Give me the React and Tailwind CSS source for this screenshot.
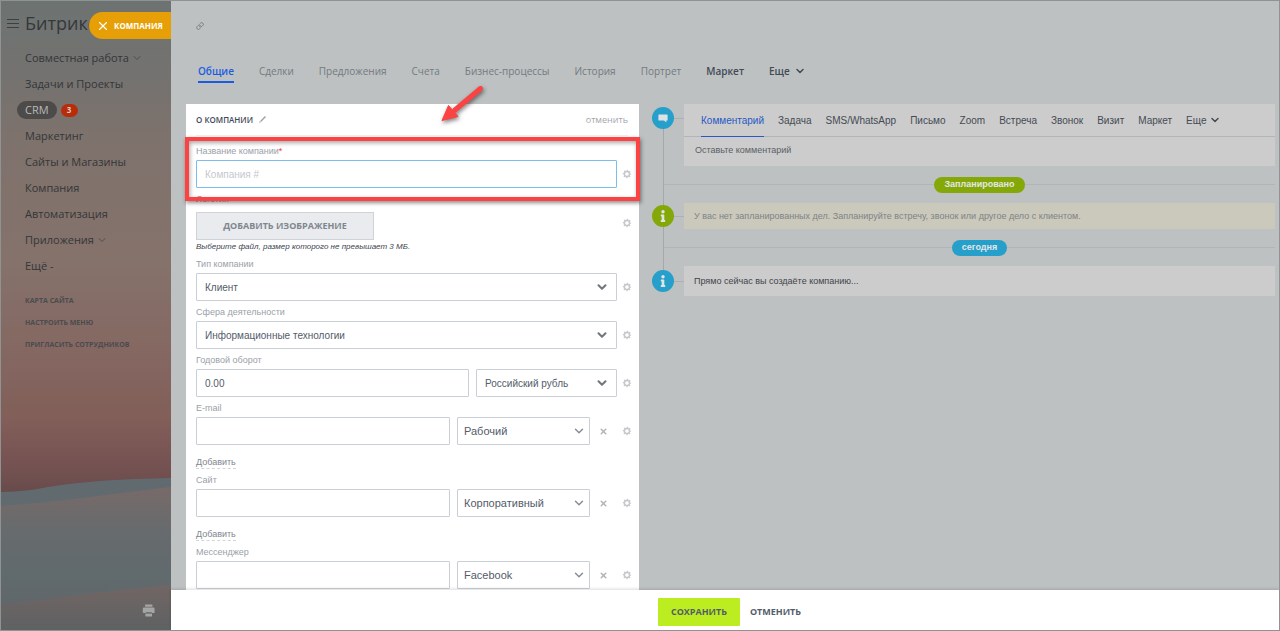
import React from "react";
import { ChevronDown, Link, X } from "lucide-react";
import { FaInfo } from "react-icons/fa";

const sans = "font-['Open_Sans',sans-serif]";
const arial = "font-['Liberation_Sans',Arial,sans-serif]";
const box = "h-[28px] border border-[#c9cfd4] rounded-[1px] bg-white text-[#535c69] outline-none";

function Gear() {
  return (
    <button type="button" aria-label="Настройки поля" className="flex size-[10px] shrink-0 items-center justify-center">
      <svg viewBox="0 0 10 10" className="size-[10px]" fill="none" stroke="#c6c9cc">
        <circle cx="5" cy="5" r="2.500" strokeWidth="1.400" />
        <circle cx="5" cy="5" r="3.600" strokeWidth="1.200" strokeDasharray="1.500 1.327" strokeDashoffset="0.750" />
      </svg>
    </button>
  );
}

function Select({ id, label, value, className, thin }) {
  return (
    <div className={"relative " + className}>
      <select id={id} aria-label={label} defaultValue={value} className={box + " w-full appearance-none pr-[24px] " + (thin ? "pl-[6px] text-[11px]" : "pl-[8px] text-[10px]")}>
        <option>{value}</option>
      </select>
      <ChevronDown
        className={"pointer-events-none absolute top-[7px] size-[14px] " + (thin ? "right-[4px] text-[#868d94]" : "right-[8px] text-[#6f7780]")}
        strokeWidth={thin ? 2.5 : 3.5}
      />
    </div>
  );
}

function Field({ id, label, required, children }) {
  return (
    <div>
      <label htmlFor={id} className="mb-[3px] block h-[12px] text-[9px] leading-[12px] text-[#9aa1a8]">
        {label}
        {required && <span className="text-[#f33]">*</span>}
      </label>
      {children}
    </div>
  );
}

function Row({ children }) {
  return (
    <div className="flex items-center gap-[5px]">
      <div className="flex min-w-0 flex-1 gap-[7px]">{children}</div>
      <Gear />
    </div>
  );
}

function MultiField({ id, label, type, kind, noAdd }) {
  return (
    <Field id={id} label={label}>
      <Row>
        <input id={id} type={type} className={box + " min-w-0 flex-1 px-[8px] text-[10px]"} />
        <Select label={label + ": тип"} value={kind} thin className="w-[133px]" />
        <button type="button" aria-label="Удалить" className="flex w-[20px] items-center pl-[2px] text-[#b0b4b8]">
          <X className="size-[9px]" strokeWidth={4} />
        </button>
      </Row>
      {!noAdd && (
        <button type="button" className="mt-[11px] block h-[13px] border-b border-dashed border-[#d3d6d9] text-[9px] leading-[13px] text-[#80868e]">
          Добавить
        </button>
      )}
    </Field>
  );
}

const menu = [
  { t: "Совместная работа", arrow: true },
  { t: "Задачи и Проекты" },
  { t: "CRM", active: true },
  { t: "Маркетинг" },
  { t: "Сайты и Магазины" },
  { t: "Компания" },
  { t: "Автоматизация" },
  { t: "Приложения", arrow: true },
  { t: "Ещё -" },
];

function Sidebar() {
  return (
    <aside className={"relative flex w-[170px] shrink-0 flex-col overflow-hidden bg-[#81706a] " + sans}>
      <svg className="absolute inset-0 h-full w-full" viewBox="0 0 170 629" preserveAspectRatio="none" aria-hidden="true">
        <defs>
          <linearGradient id="sky" x1="0" y1="0" x2="0" y2="1">
            <stop offset="0" stopColor="#6d7371" />
            <stop offset="0.12" stopColor="#747270" />
            <stop offset="0.22" stopColor="#7e726c" />
            <stop offset="0.42" stopColor="#85726b" />
            <stop offset="0.55" stopColor="#856862" />
            <stop offset="0.66" stopColor="#825f59" />
            <stop offset="0.74" stopColor="#755252" />
            <stop offset="0.78" stopColor="#694b4c" />
          </linearGradient>
          <linearGradient id="dune" x1="0" y1="0" x2="0" y2="1">
            <stop offset="0" stopColor="#786a69" />
            <stop offset="0.3" stopColor="#676b6d" />
            <stop offset="0.6" stopColor="#616a6d" />
            <stop offset="1" stopColor="#5f6568" />
          </linearGradient>
          <linearGradient id="front" x1="0" y1="0" x2="0" y2="1">
            <stop offset="0" stopColor="#716664" />
            <stop offset="1" stopColor="#5f6163" />
          </linearGradient>
        </defs>
        <rect width="170" height="629" fill="url(#sky)" />
        <path d="M0 491 C25 491 40 487 60 484 C100 479 130 478 170 477 V629 H0Z" fill="#616b6f" />
        <path d="M0 505 C50 502 110 493 170 486 V629 H0Z" fill="url(#dune)" />
        <path d="M0 604 C50 598 110 589 170 584 V629 H0Z" fill="url(#front)" />
      </svg>
      <header className="relative flex h-[44px] items-center gap-[6px] pl-[6px]">
        <button type="button" aria-label="Меню" className="flex w-[12px] flex-col gap-[3px]">
          <span className="h-px bg-[#3c4041]" />
          <span className="h-px bg-[#3c4041]" />
          <span className="h-px bg-[#3c4041]" />
        </button>
        <a href="#home" className="text-[18px] font-medium leading-[24px] text-[#34383a]">Битрикс24</a>
      </header>
      <nav className="relative">
        <ul>
          {menu.map((m) => (
            <li key={m.t} className="flex h-[26px] items-center pl-[24px] text-[11px] text-[#333638]">
              {m.active ? (
                <>
                  <a href="#crm" className="-ml-[8px] flex h-[18px] items-center rounded-full bg-[#4c4b49] px-[8px] text-[#b9b9b9]">{m.t}</a>
                  <span className="ml-[4px] flex h-[13px] w-[17px] items-center justify-center rounded-full bg-[#b92c0a] text-[8px] font-bold text-[#d8c8c4]">3</span>
                </>
              ) : (
                <a href="#item">{m.t}</a>
              )}
              {m.arrow && <ChevronDown className="ml-[2px] size-[12px] text-[#4c5051]" strokeWidth={2} />}
            </li>
          ))}
        </ul>
        <ul className="mt-[11px] pl-[24px] text-[7px] font-bold leading-[22px] text-[#4a4b4e]">
          <li><a href="#map">КАРТА САЙТА</a></li>
          <li><a href="#setup">НАСТРОИТЬ МЕНЮ</a></li>
          <li><a href="#invite">ПРИГЛАСИТЬ СОТРУДНИКОВ</a></li>
        </ul>
      </nav>
      <button type="button" aria-label="Печать" className="relative mb-[13px] mr-[16px] mt-auto self-end">
        <svg viewBox="0 0 13 13" className="size-[13px]" fill="#a3a5a6">
          <rect x="3" y="0.5" width="7.5" height="2.2" rx="0.4" />
          <path d="M2 3.6h9.4a1.2 1.2 0 0 1 1.2 1.2v3.400a.8.8 0 0 1-.8.8H10V12a.6.6 0 0 1-.6.6H4a.6.6 0 0 1-.6-.6V9H1.600a.8.8 0 0 1-.8-.8V4.800A1.2 1.2 0 0 1 2 3.600Z" />
          <rect x="3.6" y="8.200" width="6.200" height="1.500" fill="#6c6a6a" />
        </svg>
      </button>
      <button type="button" className="absolute right-0 top-[11px] flex h-[27px] w-[82px] items-center gap-[4px] rounded-l-full bg-[#e69f06] pl-[7px] text-[8px] font-bold text-white">
        <X className="size-[14px]" strokeWidth={2} />
        КОМПАНИЯ
      </button>
    </aside>
  );
}

const tabs = ["Общие", "Сделки", "Предложения", "Счета", "Бизнес-процессы", "История", "Портрет"];
const actions = ["Задача", "SMS/WhatsApp", "Письмо", "Zoom", "Встреча", "Звонок", "Визит", "Маркет"];

function Circle({ color, children }) {
  return (
    <div className={"relative flex size-[22px] shrink-0 items-center justify-center rounded-full text-[#e2e4e4] " + color}>{children}</div>
  );
}

function Divider({ color, children }) {
  return (
    <div className="flex h-[37px] items-center pl-[12px]">
      <span className="h-px w-[20px] bg-[#b0b5b7]" />
      <span className="h-px flex-1 bg-[#b0b5b7]" />
      <span className={"flex h-[16px] items-center rounded-full px-[10px] text-[9px] font-bold text-[#e4e6e6] " + color}>{children}</span>
      <span className="h-px flex-1 bg-[#b0b5b7]" />
    </div>
  );
}

function Timeline() {
  return (
    <section className={"relative self-start " + arial}>
      <div className="absolute bottom-[15px] left-[11px] top-[14px] w-px bg-[#a3a8aa]" />
      <div className="flex">
        <div className="pt-[3px]">
          <Circle color="bg-[#269fca]">
            <svg viewBox="0 0 10 10" className="size-[10px]" fill="#dde2e4">
              <path d="M1 1.500h8a.6.6 0 0 1 .6.6V7a.6.6 0 0 1-.6.6H8.300V9.600L6 7.600H1A.6.6 0 0 1 .4 7V2.100A.6.6 0 0 1 1 1.500Z" />
            </svg>
          </Circle>
        </div>
        <span className="mt-[14px] h-px w-[10px] bg-[#abb0b2]" />
        <div className="min-w-0 flex-1 bg-[#cccccc]">
          <div className="flex h-[33px] gap-[14px] border-b border-[#b2b5b7] pl-[17px] text-[10px] text-[#454b53]">
            <button type="button" className="-mb-px border-b border-[#2859c4] text-[#2859c4]">Комментарий</button>
            {actions.map((a) => (
              <button type="button" key={a}>{a}</button>
            ))}
            <button type="button" className="flex items-center gap-[3px]">
              Еще
              <ChevronDown className="size-[12px]" strokeWidth={3} />
            </button>
          </div>
          <input
            aria-label="Комментарий"
            placeholder="Оставьте комментарий"
            className="block h-[29px] w-full bg-transparent pb-[3px] pl-[11px] text-[9px] outline-none placeholder:text-[#5a5f64]"
          />
        </div>
      </div>
      <Divider color="bg-[#84a808]">Запланировано</Divider>
      <div className="flex items-center">
        <Circle color="bg-[#84a808]"><FaInfo className="size-[12px]" /></Circle>
        <span className="h-px w-[10px] bg-[#abb0b2]" />
        <p className="h-[26px] flex-1 bg-[#cac9bb] pl-[10px] text-[9px] leading-[26px] text-[#808386]">
          У вас нет запланированных дел. Запланируйте встречу, звонок или другое дело с клиентом.
        </p>
      </div>
      <Divider color="bg-[#269fca]">сегодня</Divider>
      <div className="flex items-center">
        <Circle color="bg-[#269fca]"><FaInfo className="size-[12px]" /></Circle>
        <span className="h-px w-[10px] bg-[#abb0b2]" />
        <p className="h-[30px] flex-1 bg-[#cccccc] pl-[10px] text-[9px] leading-[31px] text-[#3f444a]">Прямо сейчас вы создаёте компанию...</p>
      </div>
    </section>
  );
}

function CompanyForm() {
  return (
    <form className={"relative self-stretch bg-white pl-[10px] pr-[7px] " + arial}>
      <div className={"mr-[4px] flex h-[32px] items-center border-b border-[#f1f2f3] " + sans}>
        <h2 className="text-[8px] font-semibold text-[#424956]">О КОМПАНИИ</h2>
        <svg viewBox="0 0 8 8" className="ml-[6px] size-[7px]" fill="#9ea4aa" aria-hidden="true">
          <path d="M6.800 0 8 1.200 2.400 6.800 1.200 5.600ZM.9 6 2 7.100 0 8Z" />
        </svg>
        <button type="button" className="ml-auto text-[9px] text-[#a3a7ab]">отменить</button>
      </div>
      <div className="flex flex-col gap-[5px] pt-[9px]">
        <div className="relative">
          <Field id="name" label="Название компании" required>
            <Row>
              <input id="name" placeholder="Компания #" className="h-[28px] min-w-0 flex-1 rounded-[1px] border border-[#7dbdec] bg-white px-[8px] text-[10px] outline-none placeholder:text-[#c5c9cd]" />
            </Row>
          </Field>
          <div className="pointer-events-none absolute -bottom-[13px] -left-[11px] -right-[8px] -top-[8px] z-10 border-4 border-[#fb4343] shadow-[1px_2px_4px_rgba(0,0,0,0.45),inset_1px_2px_4px_rgba(0,0,0,0.35)]" />
        </div>
        <Field id="logo" label="Логотип">
          <div className="flex items-start justify-between pt-[4px]">
            <button id="logo" type="button" className={"h-[28px] w-[178px] border border-[#cfd3d8] bg-[#e9ebee] text-[9px] font-bold text-[#80868e] " + sans}>
              ДОБАВИТЬ ИЗОБРАЖЕНИЕ
            </button>
            <div className="pt-[6px]">
              <Gear />
            </div>
          </div>
          <p className="h-[13px] text-[8px] italic leading-[13px] text-[#3d444f]">Выберите файл, размер которого не превышает 3 МБ.</p>
        </Field>
        <Field id="type" label="Тип компании">
          <Row><Select id="type" value="Клиент" className="flex-1" /></Row>
        </Field>
        <Field id="area" label="Сфера деятельности">
          <Row><Select id="area" value="Информационные технологии" className="flex-1" /></Row>
        </Field>
        <Field id="turnover" label="Годовой оборот">
          <Row>
            <input id="turnover" defaultValue="0.00" className={box + " min-w-0 flex-1 px-[8px] text-[10px]"} />
            <Select label="Валюта" value="Российский рубль" className="w-[141px]" />
          </Row>
        </Field>
        <MultiField id="email" label="E-mail" type="email" kind="Рабочий" />
        <MultiField id="site" label="Сайт" type="url" kind="Корпоративный" />
        <MultiField id="im" label="Мессенджер" type="text" kind="Facebook" noAdd />
      </div>
      <svg viewBox="0 0 56 50" className="pointer-events-none absolute -top-[22px] left-[250px] h-[50px] w-[56px] drop-shadow-[1px_2px_2px_rgba(0,0,0,0.5)]" aria-hidden="true">
        <path d="M44.500 6.500 L19 28" stroke="#fb4343" strokeWidth="5" strokeLinecap="round" />
        <path d="M6 38.500 L12.500 23.500 L22 34.500Z" fill="#fb4343" stroke="#fb4343" strokeWidth="1" strokeLinejoin="round" />
      </svg>
    </form>
  );
}

export default function App() {
  return (
    <div className="flex h-screen overflow-hidden border border-[#8f9394]">
      <Sidebar />
      <main className="flex min-w-0 flex-1 flex-col bg-[#bdc1c2]">
        <div className="flex min-h-0 flex-1 flex-col overflow-hidden">
          <div className="flex h-[50px] items-center pl-[25px]">
            <a href="#link" aria-label="Ссылка">
              <Link className="size-[8px] text-[#6f7579]" strokeWidth={2.5} />
            </a>
          </div>
          <nav className={"mt-[10px] flex h-[43px] shrink-0 items-start gap-[25px] pl-[27px] text-[10px] font-medium leading-[20px] text-[#737a80] " + sans}>
            {tabs.map((t, i) => (
              <a key={t} href="#tab" className={i === 0 ? "border-b-2 border-[#1a5ce0] font-semibold text-[#1a5ce0]" : ""}>{t}</a>
            ))}
            <a href="#market" className="font-semibold text-[#424a55]">Маркет</a>
            <button type="button" className="flex items-center gap-[4px] font-semibold text-[#424a55]">
              Еще
              <ChevronDown className="size-[12px]" strokeWidth={3} />
            </button>
          </nav>
          <div className="grid min-h-0 flex-1 grid-cols-[453fr_623fr] gap-[13px] pl-[15px] pr-[4px]">
            <CompanyForm />
            <Timeline />
          </div>
        </div>
        <footer className={"relative z-10 flex h-[40px] shrink-0 items-center justify-center gap-[10px] bg-white pl-[9px] pt-[3px] text-[9px] font-bold text-[#525c69] shadow-[0_-1px_3px_rgba(0,0,0,0.15)] " + sans}>
          <button type="button" className="h-[28px] w-[82px] rounded-[1px] bg-[#bbed21]">СОХРАНИТЬ</button>
          <button type="button">ОТМЕНИТЬ</button>
        </footer>
      </main>
    </div>
  );
}
